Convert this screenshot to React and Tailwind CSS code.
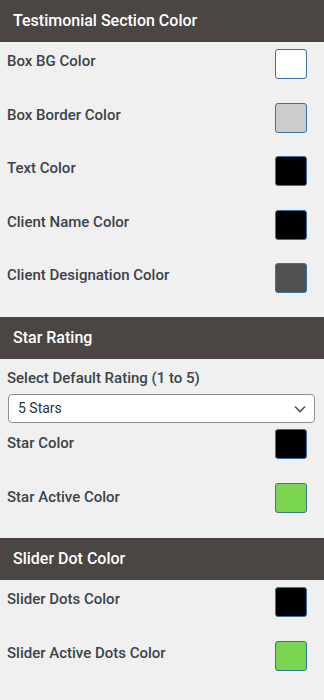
const sections = [
  {
    title: "Testimonial Section Color",
    rows: [
      { label: "Box BG Color", color: "bg-white" },
      { label: "Box Border Color", color: "bg-[#cccccc]" },
      { label: "Text Color", color: "bg-black" },
      { label: "Client Name Color", color: "bg-black" },
      { label: "Client Designation Color", color: "bg-[#505050]" },
    ],
  },
];

function Header({ title }) {
  return (
    <div className="flex h-[42px] items-center bg-[#4b4644] px-[13px] text-[16px] font-medium text-white">
      {title}
    </div>
  );
}

function ColorRow({ label, color, low }) {
  return (
    <div className="flex h-[53.5px] items-start justify-between pl-[7px] pr-[17px] pt-[7px]">
      <span className={`${low ? "mt-[2px]" : ""} text-[15px] font-medium leading-[24px] text-[#3c434a]`}>{label}</span>
      <span className={`h-[30px] w-[32px] rounded-[3px] border border-[#3b6f9e] ${color}`} />
    </div>
  );
}

export default function App() {
  return (
    <div className="min-h-[700px] w-[324px] bg-[#f0f0f0] font-['Roboto',sans-serif]">
      {sections.map((s) => (
        <div key={s.title}>
          <Header title={s.title} />
          {s.rows.map((r) => (
            <ColorRow key={r.label} {...r} />
          ))}
          <div className="h-[7.5px]" />
        </div>
      ))}

      <Header title="Star Rating" />
      <div className="px-[7px] pt-[7px]">
        <div className="text-[15px] font-medium leading-[24px] text-[#3c434a]">Select Default Rating (1 to 5)</div>
        <div className="mt-[4px] ml-px mr-[2px] flex h-[29px] items-center justify-between rounded-[4px] border border-[#8c8f94] bg-white pl-[9px] pr-[8px] text-[14px] text-[#2c3338]">
          <span>5 Stars</span>
          <svg width="12" height="8" viewBox="0 0 12 8" fill="none" stroke="#50575e" strokeWidth="1.6">
            <path d="M1 1.5l5 5 5-5" />
          </svg>
        </div>
      </div>
      <div className="-mt-[1px]">
        <ColorRow label="Star Color" color="bg-black" low />
        <ColorRow label="Star Active Color" color="bg-[#7ad651]" low />
      </div>
      <div className="h-[9px]" />

      <Header title="Slider Dot Color" />
      <ColorRow label="Slider Dots Color" color="bg-black" />
      <ColorRow label="Slider Active Dots Color" color="bg-[#7ad651]" />
    </div>
  );
}
